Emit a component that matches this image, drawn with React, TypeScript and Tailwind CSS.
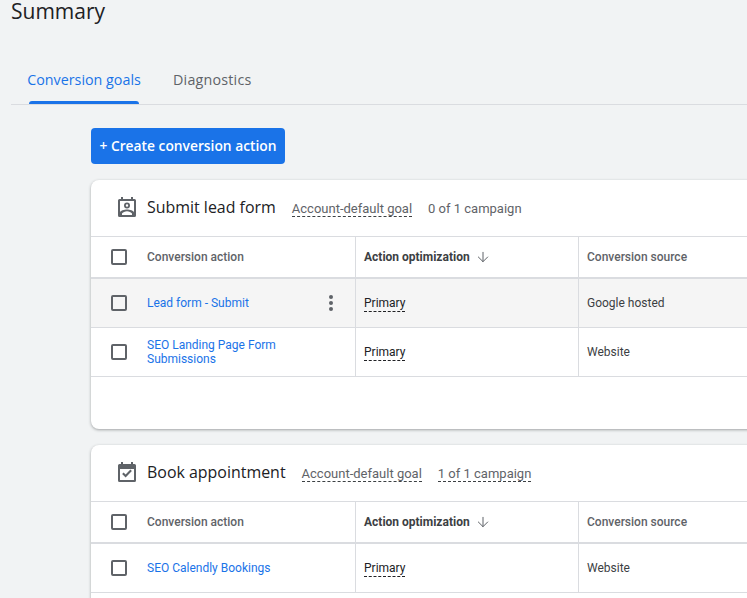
import React from "react";
import { ArrowDown } from "lucide-react";

const roboto = "font-['Roboto',sans-serif]";
const heading = "font-['Open_Sans',sans-serif]";

function Checkbox() {
  return <span className="block w-4 h-4 rounded-[2px] border-2 border-[#5f6368] bg-transparent" />;
}

function Dashed({ children, className = "" }: { children: React.ReactNode; className?: string }) {
  return <span className={"border-b border-dashed border-[#3c4043] leading-[15px] " + className}>{children}</span>;
}

function LeadIcon() {
  return (
    <svg width="24" height="24" viewBox="0 0 24 24" fill="#5f6368" className="block -mt-[2px]">
      <path d="M6 2h2v2h8V2h2v2h1.500A1.500 1.500 0 0 1 21 5.500v15a1.500 1.500 0 0 1-1.500 1.500h-15A1.500 1.500 0 0 1 3 20.500v-15A1.500 1.500 0 0 1 4.500 4H6V2zM5 6v14h14V6H5z" />
      <path d="M12 7.500a3 3 0 1 1 0 6 3 3 0 0 1 0-6zm0 1.800a1.200 1.200 0 1 0 0 2.400 1.200 1.200 0 0 0 0-2.400z" />
      <path d="M5 20v-2.500c0-1.800 4.500-3 7-3s7 1.200 7 3V20h-2v-1.500c-.6-1-3.200-2.200-5-2.200s-4.400 1.200-5 2.200V20H5z" />
    </svg>
  );
}

function CalendarIcon() {
  return (
    <svg width="24" height="24" viewBox="0 0 24 24" fill="#5f6368" className="block -mt-[2px]">
      <path d="M6 2h2v2h8V2h2v2h1.500A1.500 1.500 0 0 1 21 5.500v15a1.500 1.500 0 0 1-1.500 1.500h-15A1.500 1.500 0 0 1 3 20.500v-15A1.500 1.500 0 0 1 4.500 4H6V2zM5 9v11h14V9H5z" />
      <path d="M10.600 17.400 7.100 13.900l1.500-1.500 2 2 4.800-4.800 1.500 1.500z" />
    </svg>
  );
}

type Row = { name: React.ReactNode; source: string; hover?: boolean };

function GoalCard({
  icon,
  title,
  meta,
  rows,
  children,
}: {
  icon: React.ReactNode;
  title: string;
  meta: React.ReactNode;
  rows: Row[];
  children?: React.ReactNode;
}) {
  return (
    <section className="w-[700px] bg-white rounded-l-lg shadow-[0_1px_3px_rgba(60,64,67,0.45)]">
      <div className="h-[57px] pb-px flex items-center pl-[24px] border-b border-[#dadce0]">
        <span className="w-8 shrink-0">{icon}</span>
        <h2 className={heading + " text-[15.950px] font-normal text-[#202124] mr-4"}>{title}</h2>
        <div className={roboto + " flex items-center pt-[2px] text-[13px] text-[#5f6368]"}>{meta}</div>
      </div>
      <div className={roboto + " grid grid-cols-[265px_223px_1fr] text-xs text-[#3c4043]"}>
        <div className="h-[42px] flex items-center border-b-2 border-[#dadce0] border-r">
          <span className="w-14 pl-5 shrink-0"><Checkbox /></span>
          <span className="font-medium text-[#5f6368]">Conversion action</span>
        </div>
        <div className="h-[42px] flex items-center pl-2 border-b-2 border-[#dadce0] border-r">
          <span className="font-bold text-[#3c4043]">Action optimization</span>
          <ArrowDown className="ml-[5px] w-4 h-4 text-[#5f6368]" strokeWidth={1.5} />
        </div>
        <div className="h-[42px] flex items-center pl-2 border-b-2 border-[#dadce0] font-medium text-[#5f6368]">Conversion source</div>
        {rows.map((r, i) => (
          <React.Fragment key={i}>
            <div className={"h-[49px] flex items-center border-b border-r border-[#dadce0] " + (r.hover ? "bg-[#f5f5f5]" : "")}>
              <span className="w-14 pl-5 shrink-0"><Checkbox /></span>
              <span className="flex-1 text-[#1a73e8] leading-[14px]">{r.name}</span>
              {r.hover && (
                <span className="mr-[22px] flex flex-col gap-[2px]">
                  <i className="block w-1 h-1 rounded-full bg-[#5f6368]" />
                  <i className="block w-1 h-1 rounded-full bg-[#5f6368]" />
                  <i className="block w-1 h-1 rounded-full bg-[#5f6368]" />
                </span>
              )}
            </div>
            <div className={"h-[49px] flex items-center pl-2 pt-[2px] border-b border-r border-[#dadce0] " + (r.hover ? "bg-[#f5f5f5]" : "")}>
              <Dashed className="text-[#202124] border-[#202124]">Primary</Dashed>
            </div>
            <div className={"h-[49px] flex items-center pl-2 border-b border-[#dadce0] text-[#3c4043] " + (r.hover ? "bg-[#f5f5f5]" : "")}>{r.source}</div>
          </React.Fragment>
        ))}
      </div>
      {children}
    </section>
  );
}

export default function App() {
  return (
    <div className="w-[747px] h-[598px] overflow-hidden bg-[#f1f3f4]">
      <h1 className={heading + " pl-[11px] h-[57px] text-[21px] leading-[22px] font-normal text-[#202124]"}>Summary</h1>
      <nav className={heading + " ml-[11px] h-[48px] flex items-stretch border-b border-[#dadce0] text-[14.300px] font-medium pt-[5px]"}>
        <div className="ml-[18px] w-[110px] relative flex items-start justify-center pt-[7px] text-[#1a73e8] whitespace-nowrap">
          Conversion goals
          <span className="absolute left-0 right-0 bottom-0 h-[3px] rounded-t-sm bg-[#1a73e8]" />
        </div>
        <div className="ml-[34px] pt-[7px] text-[#5f6368] tracking-[0.2px]">Diagnostics</div>
      </nav>
      <main className="pl-[91px] pt-[23px] flex flex-col items-start">
        <button className={heading + " h-9 w-[194px] rounded bg-[#1a73e8] text-white text-[13.800px] font-semibold whitespace-nowrap"}>+ Create conversion action</button>
        <div className="mt-4">
          <GoalCard
            icon={<LeadIcon />}
            title="Submit lead form"
            meta={
              <>
                <Dashed>Account-default goal</Dashed>
                <span className="ml-4">0 of 1 campaign</span>
              </>
            }
            rows={[
              { name: "Lead form - Submit", source: "Google hosted", hover: true },
              { name: <>SEO Landing Page Form<br />Submissions</>, source: "Website" },
            ]}
          >
            <div className="h-[52px]" />
          </GoalCard>
        </div>
        <div className="mt-4">
          <GoalCard
            icon={<CalendarIcon />}
            title="Book appointment"
            meta={
              <>
                <Dashed>Account-default goal</Dashed>
                <Dashed className="ml-4">1 of 1 campaign</Dashed>
              </>
            }
            rows={[{ name: "SEO Calendly Bookings", source: "Website" }]}
          >
            <div className="h-[52px]" />
          </GoalCard>
        </div>
      </main>
    </div>
  );
}
